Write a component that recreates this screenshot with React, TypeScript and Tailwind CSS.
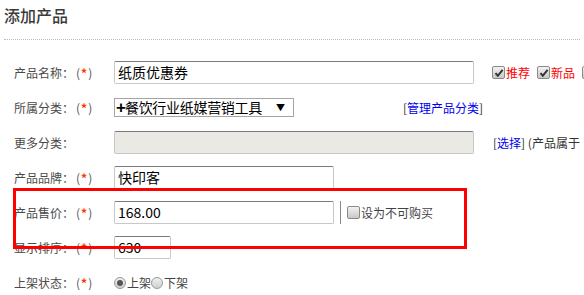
import React from 'react';

const Req: React.FC = () => (
    <span className="ml-[2px] text-[#555] tracking-[1px]">
        (<span className="text-[#ff3300] font-bold">*</span>)
    </span>
);

const Label: React.FC<{ text: string; required?: boolean }> = ({ text, required }) => (
    <div className="w-[100px] shrink-0 flex items-center text-[12px] text-[#4a4a4a]">
        <span>{text}</span>
        {required && <Req />}
    </div>
);

const Check: React.FC<{ checked?: boolean }> = ({ checked }) => (
    <span className="inline-flex w-[13px] h-[13px] shrink-0 items-center justify-center rounded-[2px] border border-[#8a8a8a] bg-gradient-to-b from-[#f2f2f2] to-[#c8c8c8]">
        {checked && (
            <svg width="10" height="10" viewBox="0 0 10 10">
                <path d="M1.5 5.2 L3.8 7.8 L8.6 1.8" fill="none" stroke="#333" strokeWidth="2" />
            </svg>
        )}
    </span>
);

const Radio: React.FC<{ checked?: boolean }> = ({ checked }) => (
    <span className="inline-flex w-[12px] h-[12px] shrink-0 items-center justify-center rounded-full border border-[#999] bg-gradient-to-b from-[#f0f0f0] to-[#cfcfcf]">
        {checked && <span className="w-[6px] h-[6px] rounded-full bg-[#555]" />}
    </span>
);

const inputCls =
    'h-[23px] shrink-0 rounded-[2px] border border-[#c8c8c8] border-t-[#7a7a7a] px-[3px] flex items-center text-[14px] text-black';

const App: React.FC = () => {
    return (
        <div className="relative w-[584px] h-[295px] overflow-hidden bg-white whitespace-nowrap font-['Noto_Sans_CJK_SC','Noto_Sans',sans-serif]">
            <div className="px-[4px] pt-[6px]">
                <h1 className="text-[16px] leading-[18px] font-medium text-[#3a3a3a]">添加产品</h1>
                <div className="mt-[15px] border-t border-dotted border-[#bbb]" />
            </div>

            <div className="mt-[15px] pl-[14px]">
                {/* 产品名称 */}
                <div className="h-[35px] flex items-center">
                    <Label text="产品名称：" required />
                    <div className={`${inputCls} w-[360px]`}>纸质优惠券</div>
                    <div className="ml-[18px] flex items-center text-[12px] text-[#ff0000]">
                        <Check checked />
                        <span className="ml-[1px]">推荐</span>
                        <span className="ml-[7px]" />
                        <Check checked />
                        <span className="ml-[1px]">新品</span>
                        <span className="ml-[7px]" />
                        <Check checked />
                    </div>
                </div>

                {/* 所属分类 */}
                <div className="h-[35px] flex items-center">
                    <Label text="所属分类：" required />
                    <div className="w-[180px] h-[19px] shrink-0 border border-[#a5a5a5] flex items-center justify-between pl-[1px] pr-[8px] text-[14px] text-black">
                        <span className="flex items-center">
                            <span className="font-['Liberation_Sans',sans-serif] font-bold text-[17px] leading-none -mr-[1px]">+</span>
                            <span className="tracking-[-0.3px]">餐饮行业纸媒营销工具</span>
                        </span>
                        <span className="text-[9px]">▼</span>
                    </div>
                    <div className="ml-[109px] text-[12px] text-[#333]">
                        [<span className="text-[#0000ee]">管理产品分类</span>]
                    </div>
                </div>

                {/* 更多分类 */}
                <div className="h-[35px] flex items-center">
                    <Label text="更多分类：" />
                    <div className={`${inputCls} w-[360px] bg-[#ebe9e3]`} />
                    <div className="ml-[19px] text-[12px] text-[#333]">
                        [<span className="text-[#0000ee]">选择</span>] (产品属于
                    </div>
                </div>

                {/* 产品品牌 */}
                <div className="h-[35px] flex items-center">
                    <Label text="产品品牌：" required />
                    <div className={`${inputCls} w-[220px]`}>快印客</div>
                </div>

                {/* 产品售价 */}
                <div className="h-[35px] flex items-center">
                    <Label text="产品售价：" required />
                    <div className={`${inputCls} w-[220px]`}>168.00</div>
                    <div className="ml-[6px] w-[1px] h-[23px] bg-[#888]" />
                    <div className="ml-[6px] flex items-center text-[12px] text-[#444]">
                        <Check />
                        <span className="ml-[1px]">设为不可购买</span>
                    </div>
                </div>

                {/* 显示排序 */}
                <div className="h-[35px] flex items-center">
                    <Label text="显示排序：" required />
                    <div className={`${inputCls} w-[57px]`}>630</div>
                </div>

                {/* 上架状态 */}
                <div className="h-[35px] flex items-center">
                    <Label text="上架状态：" required />
                    <div className="flex items-center text-[12px] text-[#444]">
                        <Radio checked />
                        <span className="ml-[1px]">上架</span>
                        <Radio />
                        <span className="ml-[1px]">下架</span>
                    </div>
                </div>
            </div>

            {/* annotation frame */}
            <div className="absolute left-[13px] top-[188px] w-[454px] h-[61px] border-[3px] border-[#ff0000]" />
        </div>
    );
};

export default App;
